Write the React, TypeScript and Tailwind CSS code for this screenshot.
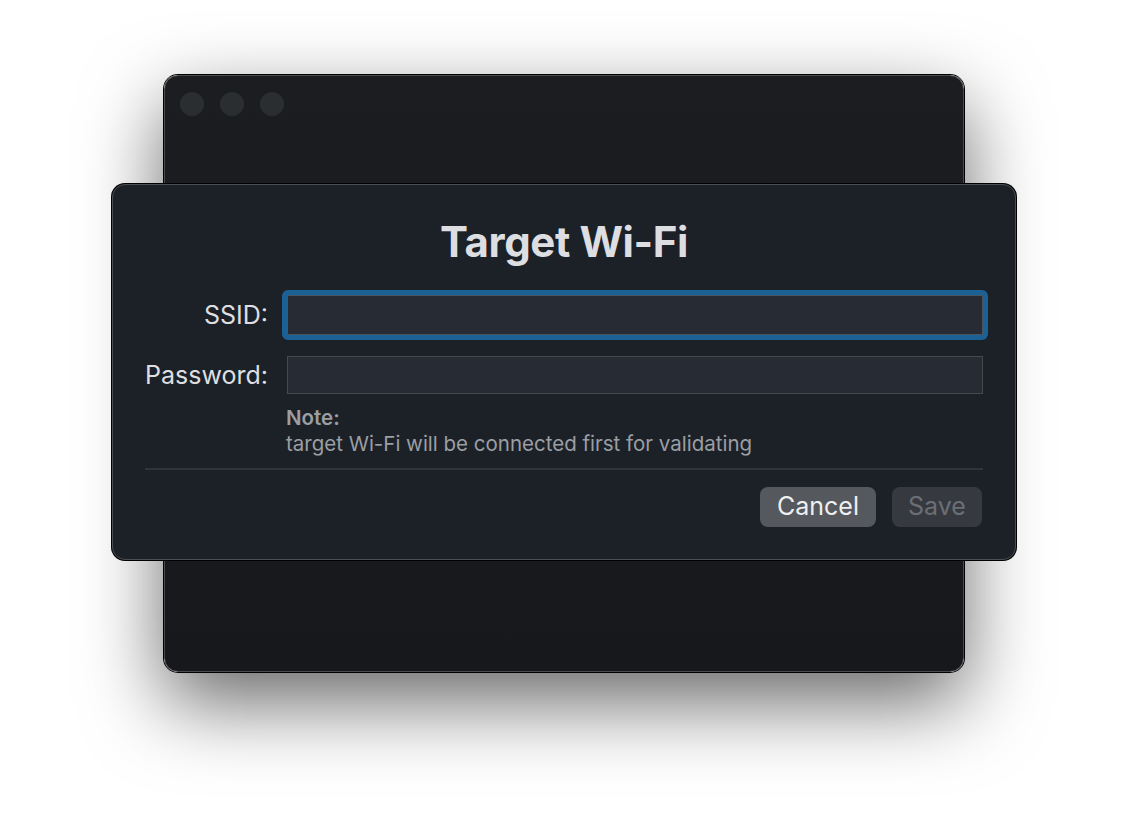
const font = { fontFamily: 'Inter, "Noto Sans", sans-serif' };

function TrafficLights() {
  return (
    <div className="flex gap-4 pl-[15px] pt-4">
      <span className="size-6 rounded-full bg-[#2b2e31]" />
      <span className="size-6 rounded-full bg-[#2b2e31]" />
      <span className="size-6 rounded-full bg-[#2b2e31]" />
    </div>
  );
}

function Field({ label, focused }: { label: string; focused?: boolean }) {
  return (
    <div className="flex items-center">
      <label className="w-[123px] shrink-0 text-right text-[25px] leading-none text-[#dedfe1]">
        {label}
      </label>
      {focused ? (
        <div className="ml-[14px] rounded-[6px] border-[5px] border-[#1c6196]">
          <div className="h-[40px] w-[696px] border border-[#4b5560] bg-[#272b33]" />
        </div>
      ) : (
        <div className="ml-[19px] h-[38px] w-[696px] border border-[#45484d] bg-[#272b33]" />
      )}
    </div>
  );
}

export default function App() {
  return (
    <div
      className="h-[820px] w-full overflow-hidden bg-white pl-[164px] pt-[75px]"
      style={font}
    >
      <div className="relative h-[597px] w-[800px] rounded-[14px] border border-[#4a4c50] bg-gradient-to-b from-[#1c1d20] to-[#17181b] shadow-[0_0_0_1px_#000,0_30px_80px_rgba(0,0,0,0.6)]">
        <TrafficLights />

        <div className="absolute left-[-53px] top-[108px] flex h-[376px] w-[904px] flex-col rounded-[13px] border border-[#4b4f55] bg-[#1c2128] px-8 shadow-[0_0_0_1px_#000]">
          <h1 className="pt-[33px] text-center text-[42px] font-bold leading-[48px] tracking-[-0.01em] text-[#dcdee1]">
            Target Wi-Fi
          </h1>

          <div className="mt-[24px] flex flex-col gap-[16px]">
            <Field label="SSID:" focused />
            <Field label="Password:" />
          </div>

          <div className="ml-[141px] mt-[11px] text-[20.5px] leading-[26px] text-[#9b9ea3]">
            <p className="font-semibold">Note:</p>
            <p>target Wi-Fi will be connected first for validating</p>
          </div>

          <div className="mt-[11px] h-[2px] bg-[#30353c]" />

          <div className="mt-[17px] flex justify-end gap-4 pr-[1px]">
            <button className="h-10 w-[116px] rounded-lg bg-[#55595e] text-[25px] text-[#eeeff0]">
              Cancel
            </button>
            <button className="h-10 w-[90px] rounded-lg bg-[#363a40] text-[25px] text-[#6b6f75]">
              Save
            </button>
          </div>
        </div>
      </div>
    </div>
  );
}
